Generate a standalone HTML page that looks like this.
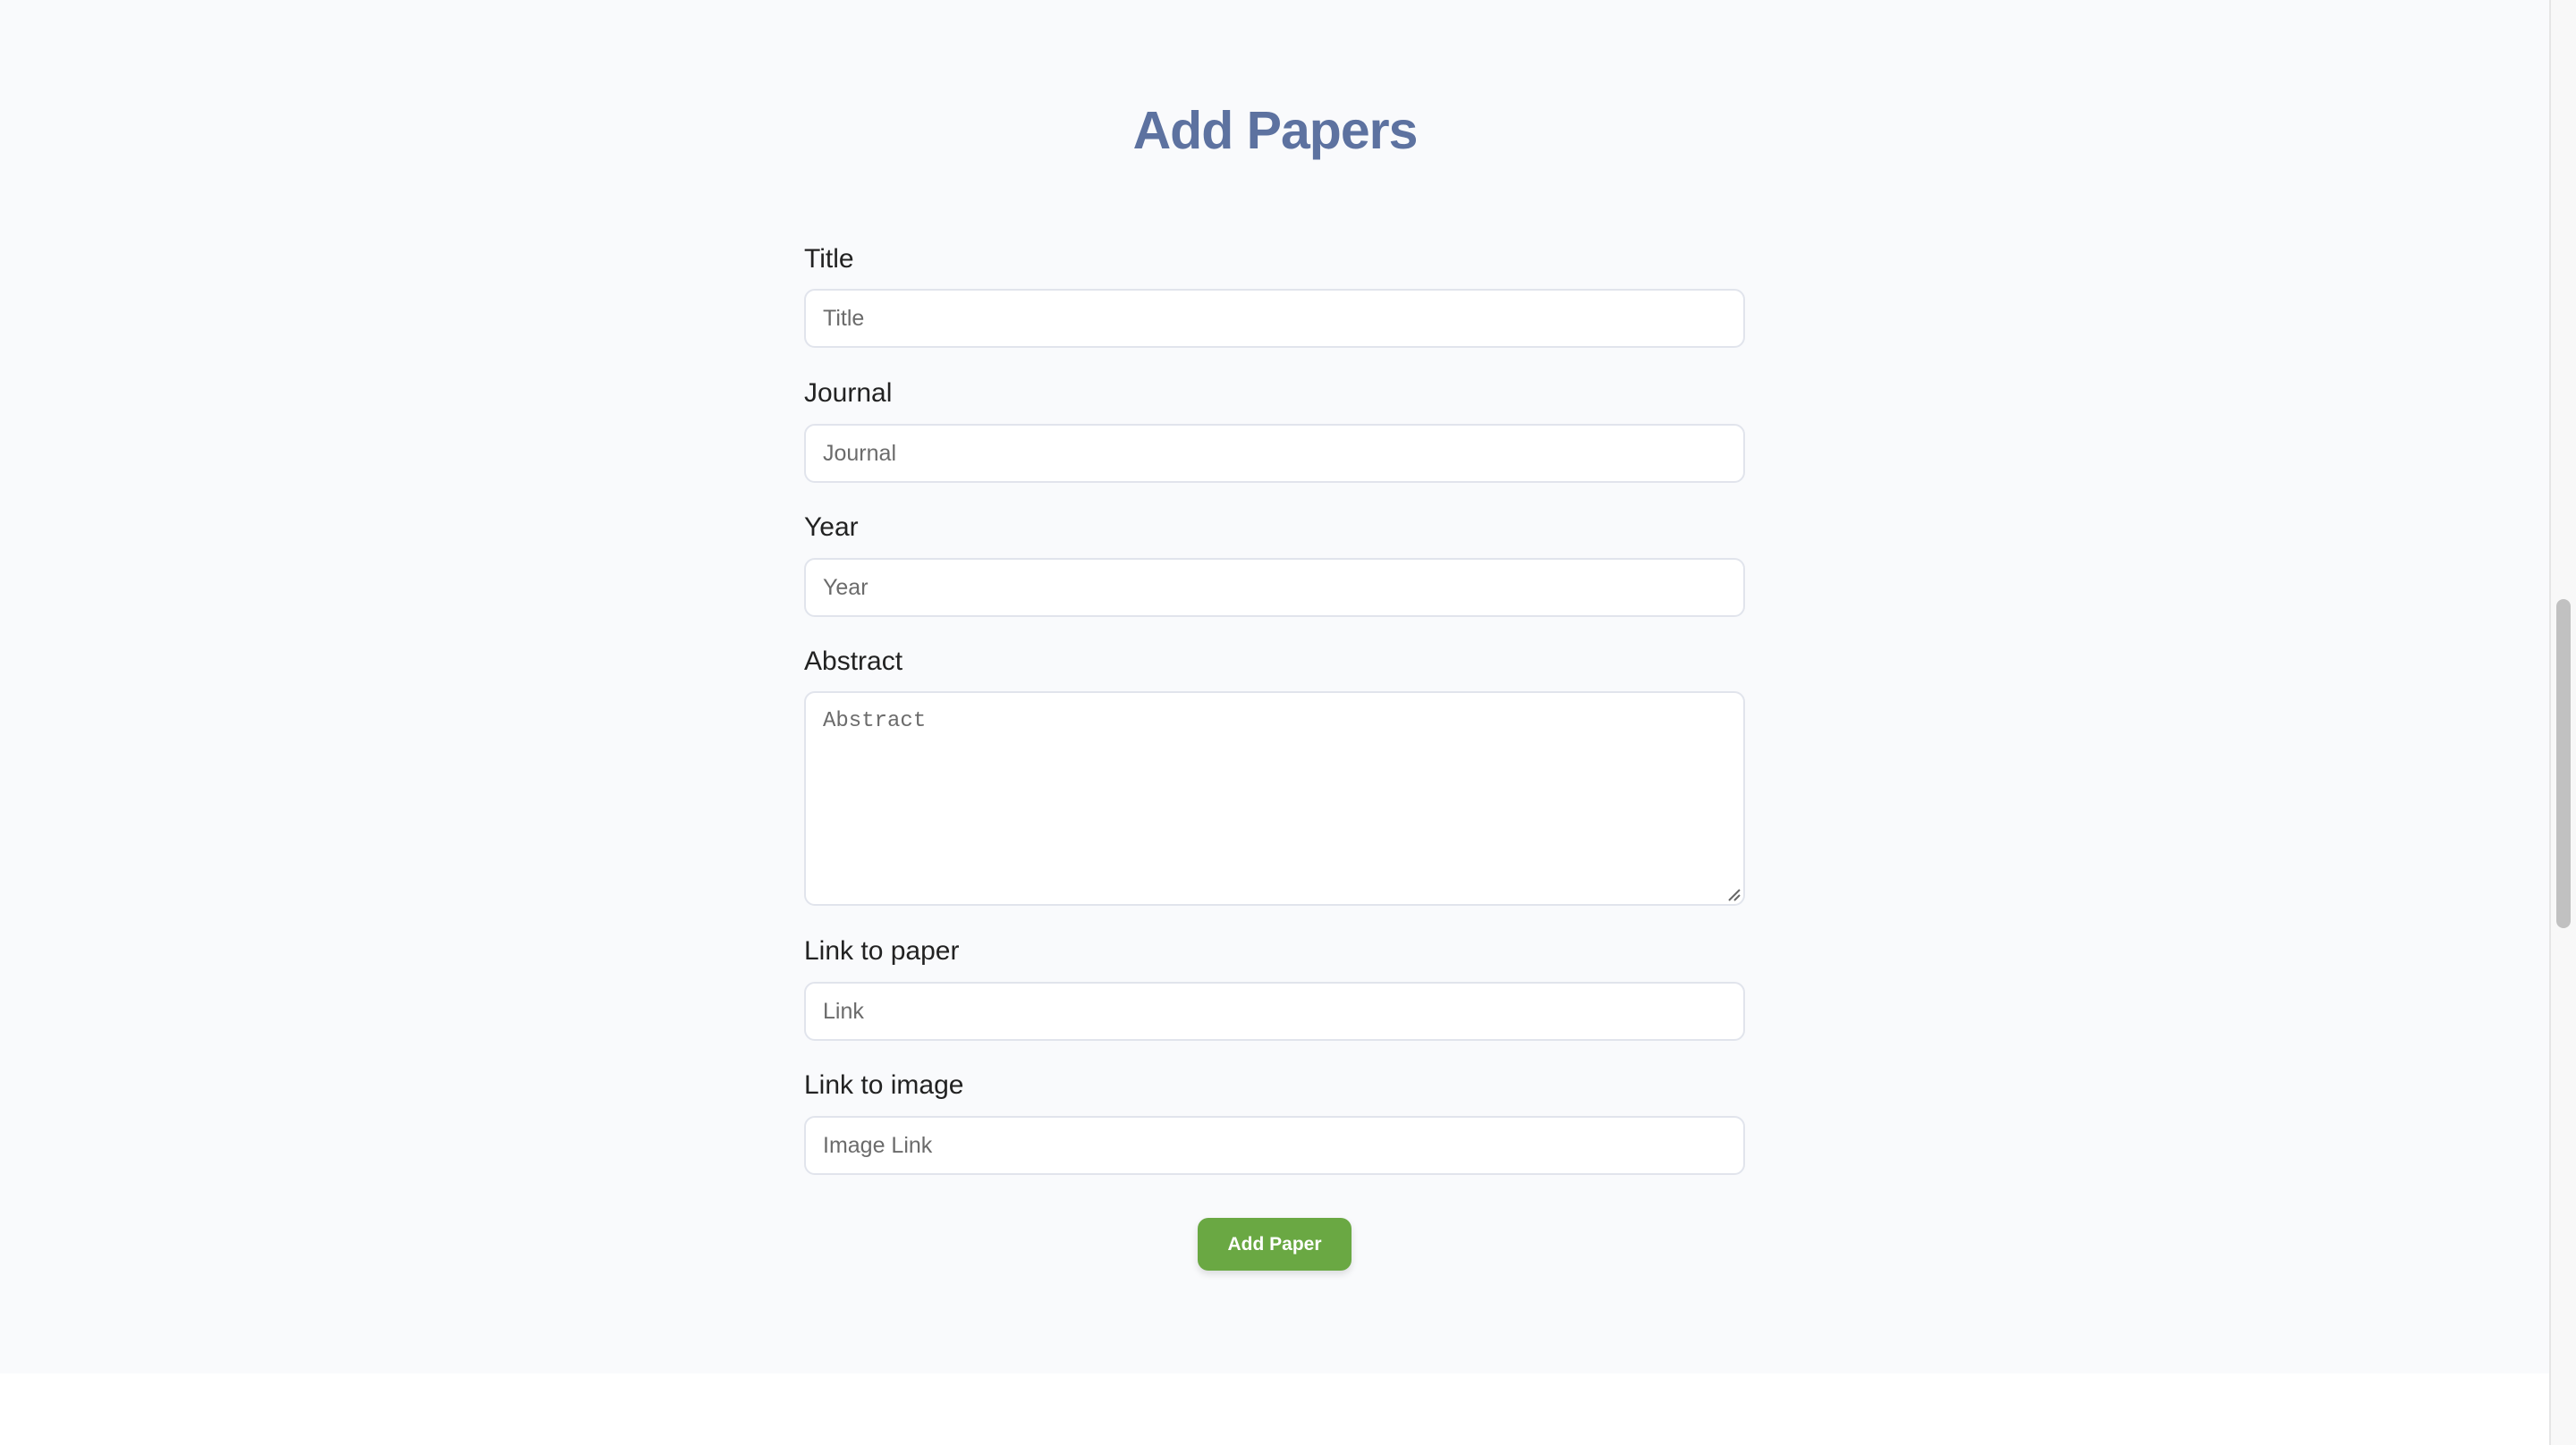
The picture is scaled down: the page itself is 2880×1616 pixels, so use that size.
<!DOCTYPE html>
<html><head><meta charset="utf-8"><style>
*{box-sizing:border-box;margin:0;padding:0}
html,body{width:2880px;height:1616px;overflow:hidden}
body{background:#fff;font-family:"Liberation Sans",Arial,sans-serif;position:relative}
.bg{position:absolute;left:0;top:0;width:2851px;height:1536px;background:#f9fafc}
.sb{position:absolute;left:2850px;top:0;width:30px;height:1616px;background:#f8f8f8;border-left:2px solid #e6e6e6}
.thumb{position:absolute;left:2858px;top:670px;width:16px;height:368px;border-radius:8px;background:#c1c1c1}
h1{position:absolute;left:0;width:2851px;top:112px;text-align:center;font-size:59px;font-weight:bold;color:#5d72a0;letter-spacing:-1px}
.lbl{position:absolute;left:899px;font-size:30px;color:#222}
.in{position:absolute;left:899px;width:1052px;height:66px;background:#fff;border:2px solid #e1e4ec;border-radius:12px;font-size:25px;color:#6b6b6b;padding-left:19px;line-height:62px}
.ta{height:240px;font-family:"Liberation Mono",monospace;font-size:24px;line-height:1;padding-top:20px}
.btn{position:absolute;left:1339px;top:1362px;width:172px;height:59px;background:#6aa843;border-radius:12px;color:#fff;font-weight:bold;font-size:21px;text-align:center;line-height:59px;box-shadow:0 4px 8px rgba(0,0,0,.12)}
</style></head><body>
<div class="bg"></div>
<h1>Add Papers</h1>
<div class="lbl" style="top:273px">Title</div>
<div class="in" style="top:323px">Title</div>
<div class="lbl" style="top:423px">Journal</div>
<div class="in" style="top:474px">Journal</div>
<div class="lbl" style="top:573px">Year</div>
<div class="in" style="top:624px">Year</div>
<div class="lbl" style="top:723px">Abstract</div>
<div class="in ta" style="top:773px">Abstract
<svg style="position:absolute;right:2px;bottom:2px" width="16" height="16"><path d="M2 14L14 2M8 14L14 8" stroke="#666" stroke-width="2"/></svg></div>
<div class="lbl" style="top:1047px">Link to paper</div>
<div class="in" style="top:1098px">Link</div>
<div class="lbl" style="top:1197px">Link to image</div>
<div class="in" style="top:1248px">Image Link</div>
<div class="btn">Add Paper</div>
<div class="sb"></div><div class="thumb"></div>
</body></html>
